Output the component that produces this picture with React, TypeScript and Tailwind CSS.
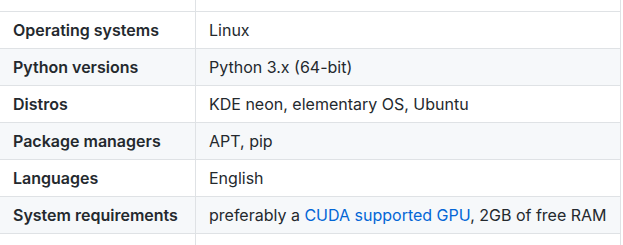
import React from "react";

const rows: { k: string; v: React.ReactNode }[] = [
  { k: "Operating systems", v: "Linux" },
  { k: "Python versions", v: "Python 3.x (64-bit)" },
  { k: "Distros", v: "KDE neon, elementary OS, Ubuntu" },
  { k: "Package managers", v: "APT, pip" },
  { k: "Languages", v: "English" },
  {
    k: "System requirements",
    v: (
      <>
        preferably a <a className="text-[#0366d6]">CUDA supported GPU</a>, 2GB of free RAM
      </>
    ),
  },
];

export default function App() {
  return (
    <div
      className="w-[623px] h-[245px] overflow-hidden bg-white text-[#24292e] text-[16px] leading-[24px]"
      style={{ fontFamily: "Inter, 'Liberation Sans', sans-serif" }}
    >
      <div className="-ml-px w-[622px] border-x border-[#dfe2e5]">
        <div className="flex h-[11px]">
          <div className="w-[196px] border-r border-[#dfe2e5]" />
          <div className="flex-1" />
        </div>
        {rows.map((r, i) => (
          <div
            key={r.k}
            className={`flex border-t border-[#dfe2e5] ${i % 2 === 1 ? "bg-[#f6f8fa]" : "bg-white"}`}
          >
            <div className="w-[196px] shrink-0 border-r border-[#dfe2e5] px-[13px] py-[6px] font-semibold">
              {r.k}
            </div>
            <div className="flex-1 px-[13px] py-[6px] whitespace-nowrap">{r.v}</div>
          </div>
        ))}
        <div className="flex h-[12px] border-t border-[#dfe2e5]">
          <div className="w-[196px] border-r border-[#dfe2e5]" />
          <div className="flex-1" />
        </div>
      </div>
    </div>
  );
}
